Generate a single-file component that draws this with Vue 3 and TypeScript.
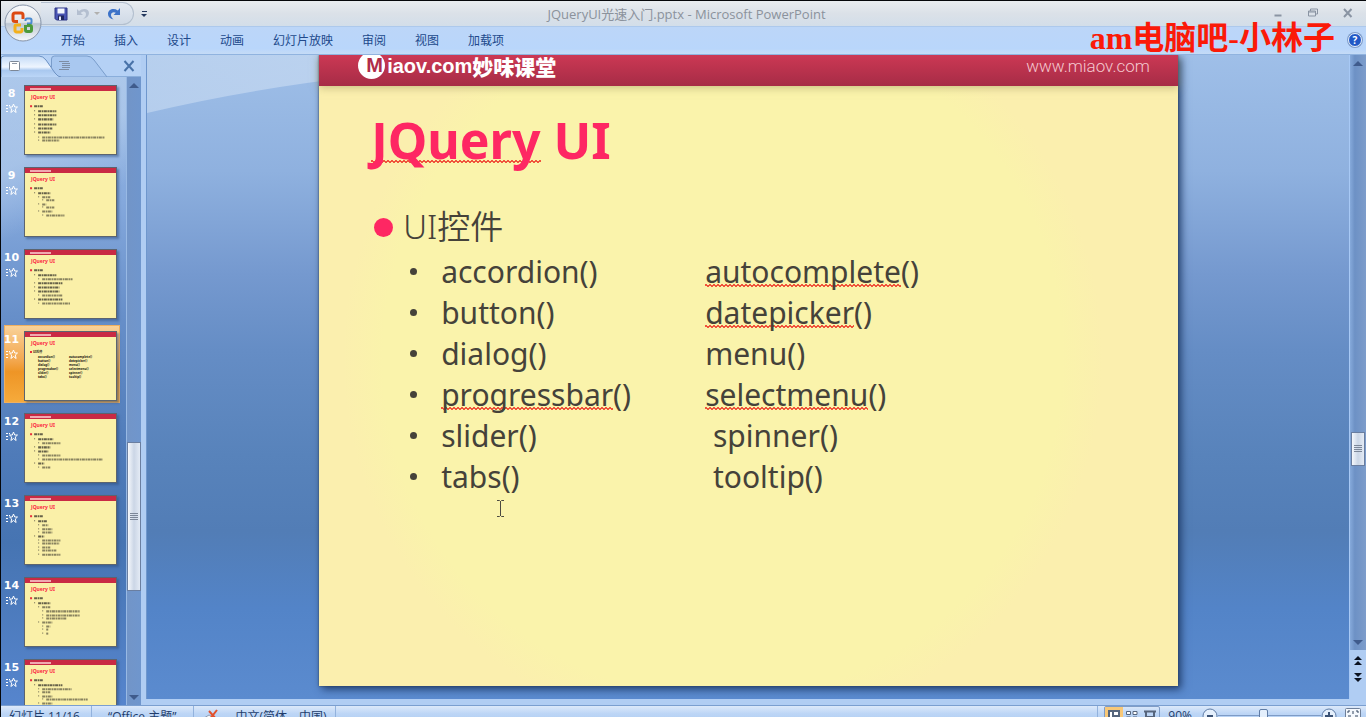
<script setup lang="ts">
import { ref } from 'vue'

interface Line {
  level: number
  width: number
  y: number
}
interface Thumb {
  no: number
  lines: Line[]
}
interface Cell {
  word: string
  pad?: string
  wavy?: boolean
}

const menus: string[] = ['开始', '插入', '设计', '动画', '幻灯片放映', '审阅', '视图', '加载项']

const l = (level: number, width: number, y: number): Line => ({ level, width, y })

const thumbs: Thumb[] = [
  { no: 8, lines: [l(0, 9, 19), l(1, 18, 24), l(1, 18, 28), l(1, 15, 32), l(1, 18, 37), l(1, 14, 41), l(1, 12, 45), l(2, 62, 50), l(2, 17, 53)] },
  { no: 9, lines: [l(0, 9, 19), l(1, 12, 24), l(2, 8, 28), l(3, 8, 31), l(2, 4, 35), l(3, 8, 38), l(2, 10, 42), l(3, 18, 46)] },
  { no: 10, lines: [l(0, 9, 19), l(1, 18, 24), l(2, 30, 28), l(1, 24, 32), l(1, 21, 36), l(1, 21, 40), l(2, 20, 44), l(1, 24, 48), l(2, 28, 52)] },
  { no: 11, lines: [] },
  { no: 12, lines: [l(0, 9, 19), l(1, 15, 24), l(2, 18, 28), l(1, 12, 32), l(1, 10, 36), l(2, 18, 40), l(2, 60, 44), l(1, 6, 48), l(2, 8, 52)] },
  { no: 13, lines: [l(0, 9, 19), l(1, 9, 24), l(2, 6, 28), l(2, 10, 32), l(2, 10, 35), l(1, 6, 39), l(2, 18, 43), l(2, 17, 46), l(2, 8, 50), l(2, 14, 53), l(2, 18, 57)] },
  { no: 14, lines: [l(0, 9, 19), l(1, 12, 24), l(2, 8, 28), l(3, 33, 32), l(3, 33, 36), l(3, 20, 39), l(2, 10, 43), l(3, 4, 47), l(3, 2, 50), l(3, 2, 54)] },
  { no: 15, lines: [l(0, 9, 19), l(1, 24, 24), l(2, 29, 28), l(2, 8, 31), l(2, 10, 35), l(3, 41, 38), l(2, 10, 42), l(3, 24, 45)] },
]
const current = ref<number>(11)
const zoom = ref<number>(44)

const rows: [Cell, Cell][] = [
  [{ word: 'accordion' }, { word: 'autocomplete', wavy: true }],
  [{ word: 'button' }, { word: 'datepicker', wavy: true }],
  [{ word: 'dialog' }, { word: 'menu' }],
  [{ word: 'progressbar', wavy: true }, { word: 'selectmenu', wavy: true }],
  [{ word: 'slider' }, { word: 'spinner', pad: '\u00a0' }],
  [{ word: 'tabs' }, { word: 'tooltip', pad: '\u00a0' }],
]
</script>

<template>
  <div class="screen">
    <div class="window">
      <header class="titlebar">
        <div class="qat">
          <button class="tool" aria-label="保存">
            <svg width="14" height="14" viewBox="0 0 14 14">
              <path d="M1 1h12v12H2.500L1 11.500z" fill="#4a55b4" stroke="#2c3484" />
              <path d="M3.500 1.500h7v5h-7z" fill="#f3f6fd" />
              <path d="M4 8.500h6V13H4z" fill="#20275f" />
              <path d="M5 9.500h2V13H5z" fill="#e6eaf6" />
            </svg>
          </button>
          <button class="tool" aria-label="撤消">
            <svg width="14" height="14" viewBox="0 0 14 14">
              <path d="M1 2v6h6L4.800 5.900C7 3.500 10 4 10 7c0 2-1 3.500-3 5 4-1 6-3.200 6-6C13 1.500 7 .5 3 4z" fill="#b4bfd0" />
            </svg>
          </button>
          <i class="caret pale"></i>
          <button class="tool" aria-label="恢复">
            <svg width="14" height="14" viewBox="0 0 14 14">
              <path d="M13 1v7H6.500L8.800 5.700C6.500 4.500 4 5.500 4 8c0 1.600 1 3 2.600 4.500C3 11.800 1 9.800 1 7c0-4.500 5.500-6.500 9.800-3.600z" fill="#3c72c8" />
            </svg>
          </button>
        </div>
        <button class="more" aria-label="自定义快速访问工具栏"><i class="bar"></i><i class="caret"></i></button>
        <h1 class="caption">JQueryUI光速入门.pptx - Microsoft PowerPoint</h1>
        <div class="winbtns">
          <button aria-label="最小化"><svg width="10" height="10" viewBox="0 0 10 10"><path d="M1.500 7.500h7" stroke="#8a94a3" stroke-width="2" /></svg></button>
          <button aria-label="还原"><svg width="10" height="10" viewBox="0 0 10 10"><path d="M2.500 3V1h7v5h-2M.5 3h7v5h-7zM.5 4h7" fill="none" stroke="#8a94a3" /></svg></button>
          <button aria-label="关闭"><svg width="10" height="10" viewBox="0 0 10 10"><path d="M1 1l7.500 8M8.500 1L1 9" stroke="#8a94a3" stroke-width="2" /></svg></button>
        </div>
      </header>

      <nav class="ribbon">
        <button v-for="m in menus" :key="m">{{ m }}</button>
        <button class="help" aria-label="帮助">?</button>
      </nav>
      <button class="orb" aria-label="Office 按钮">
        <svg width="38" height="38" viewBox="0 0 38 38">
          <defs>
            <linearGradient id="orb" x1="0" y1="0" x2="0" y2="1">
              <stop offset="0" stop-color="#fbfcfd" />
              <stop offset=".48" stop-color="#dfe4ea" />
              <stop offset=".52" stop-color="#bcc6d2" />
              <stop offset="1" stop-color="#f6f9fc" />
            </linearGradient>
          </defs>
          <circle cx="19" cy="19" r="18" fill="url(#orb)" stroke="#8593a8" />
          <g fill="none">
            <path d="M14 17.500h-3a2 2 0 0 1-2-2V11a2 2 0 0 1 2-2h6a2 2 0 0 1 2 2v4" stroke="#dc4a12" stroke-width="3" />
            <path d="M21.500 17v-1a1.500 1.500 0 0 1 1.500-1.500h3a1.500 1.500 0 0 1 1.500 1.500v2a1.500 1.500 0 0 1-1.500 1.500h-3" stroke="#4a8ad0" stroke-width="2" />
            <path d="M18 24v2.500a1.500 1.500 0 0 1-1.500 1.500h-4a1.500 1.500 0 0 1-1.500-1.500v-4a1.500 1.500 0 0 1 1.500-1.500H17" stroke="#f3b01c" stroke-width="3" />
            <path d="M21.500 21v5a1.500 1.500 0 0 0 1.500 1.500h3a1.500 1.500 0 0 0 1.500-1.500v-3a1.500 1.500 0 0 0-1.500-1.500h-3" stroke="#4b9a3c" stroke-width="3" />
          </g>
        </svg>
      </button>
      <p class="mark">am电脑吧-小林子</p>

      <main class="work">
        <aside class="panel">
          <div class="tabs">
            <svg class="tabshape" width="106" height="22" viewBox="0 0 106 22">
              <defs>
                <linearGradient id="tab" x1="0" y1="0" x2="0" y2="1">
                  <stop offset="0" stop-color="#c4dbf7" />
                  <stop offset=".5" stop-color="#eef5fe" />
                  <stop offset=".65" stop-color="#a9c8ef" />
                  <stop offset="1" stop-color="#bed8f8" />
                </linearGradient>
              </defs>
              <path d="M50.500 20V4q0-3 3-3H86q4 0 7 4l13 17H56z" fill="#a9c8f0" stroke="#7a9dcb" />
              <path d="M0 23V4q0-3 3-3h35q4 0 7 4l9 13q3 4 6 4" fill="url(#tab)" stroke="#6d92c4" />
              <rect x="8.500" y="6.500" width="10" height="9" rx="1" fill="#fff" stroke="#7c8796" />
              <path d="M11 8.500h5" stroke="#8e98a6" />
              <path d="M58 6.500h10M61 8.500h8M61 10.500h8M61 12.500h8M58 14.500h10" stroke="#7d8ea6" />
            </svg>
            <button class="shut" aria-label="关闭窗格">
              <svg width="12" height="12" viewBox="0 0 12 12"><path d="M1.500 1l9 10M10.500 1l-9 10" stroke="#4872a8" stroke-width="2" /></svg>
            </button>
          </div>
          <div class="listwrap">
            <ol class="list">
              <li v-for="t in thumbs" :key="t.no" :class="{ on: t.no === current }">
                <div class="side">
                  <b>{{ t.no }}</b>
                  <svg width="12" height="11" viewBox="0 0 12 11">
                    <path d="M7.500 1l1.200 3H11.500L9.300 6l.8 3.500-2.600-2-2.600 2L5.700 6 3.500 4h2.800z" fill="none" stroke="#fff" />
                    <path d="M0 2.500h4M0 5.500h3M0 8.500h3" stroke="#fff" stroke-dasharray="2 1" />
                  </svg>
                </div>
                <div class="mini">
                  <div class="minihead"></div>
                  <strong>JQuery UI</strong>
                  <div v-if="t.no === 11" class="minitext">
                    <p class="lead">UI控件</p>
                    <p v-for="r in rows" :key="r[0].word"><span>{{ r[0].word }}()</span><span>{{ r[1].word }}()</span></p>
                  </div>
                  <svg v-else class="lines" viewBox="0 0 90 68">
                    <template v-for="(n, i) in t.lines" :key="i">
                      <rect :x="5 + n.level * 4" :y="n.y" :width="n.level ? 1 : 2" :height="n.level ? 1 : 2" :fill="n.level ? '#6b6650' : '#e8303c'" />
                      <path :d="`M${9 + n.level * 4} ${n.y + 1}h${n.width}`" stroke="#4d4938" stroke-width="2" stroke-dasharray="3 .6 1.500 .5" :opacity="n.level > 1 ? 0.65 : 0.85" />
                    </template>
                  </svg>
                </div>
              </li>
            </ol>
            <div class="scroll">
              <i class="up"></i>
              <i class="gap"></i>
              <i class="grip"></i>
              <i class="gap low"></i>
              <i class="down"></i>
            </div>
          </div>
        </aside>

        <section class="canvas">
          <svg class="sheen" width="340" height="60" viewBox="0 0 340 60">
            <defs>
              <linearGradient id="sheen" x1="0" y1="0" x2="1" y2="0">
                <stop offset="0" stop-color="#bfd5f0" stop-opacity=".75" />
                <stop offset="1" stop-color="#c9dbf2" stop-opacity=".75" />
              </linearGradient>
            </defs>
            <path d="M0 0H340V10Q150 22 0 58z" fill="url(#sheen)" />
          </svg>
          <article class="slide">
            <div class="band">
              <div class="logo"><span class="disc">M</span><span class="latin">iaov.com</span><span class="han">妙味课堂</span></div>
              <span class="site">www.miaov.com</span>
            </div>
            <div class="body">
              <h2><span class="wavy">JQuery</span> UI</h2>
              <h3>UI控件</h3>
              <ul>
                <li v-for="r in rows" :key="r[0].word">
                  <span v-for="c in r" :key="c.word">{{ c.pad }}<span :class="{ wavy: c.wavy }">{{ c.word }}</span>()</span>
                </li>
              </ul>
            </div>
          </article>
          <svg class="ibeam" width="9" height="17" viewBox="0 0 9 17"><path d="M1 .5h2.500l1 1 1-1H8M4.500 1v15M1 16.500h2.500l1-1 1 1H8" fill="none" stroke="#4c4a40" /></svg>
        </section>

        <div class="vscroll">
          <div class="track">
            <i class="up"></i>
            <i class="gap"></i>
            <i class="grip"></i>
            <i class="gap low"></i>
            <i class="down"></i>
          </div>
          <button aria-label="上一张"><svg width="10" height="10" viewBox="0 0 10 10"><path d="M5 0l4 4H1zM5 5l4 4H1z" fill="#0b1220" /></svg></button>
          <button aria-label="下一张"><svg width="10" height="10" viewBox="0 0 10 10"><path d="M5 5L1 1h8zM5 10L1 6h8z" fill="#0b1220" /></svg></button>
        </div>
      </main>

      <footer class="status">
        <span class="cell first">幻灯片 11/16</span>
        <span class="cell theme">“Office 主题”</span>
        <span class="cell lang">
          <svg width="16" height="16" viewBox="0 0 16 16">
            <path d="M1 10l5-3 4 2v6H1z" fill="#eef3fa" stroke="#8c9bb3" />
            <path d="M6 3l8 9M14 2L6 12" stroke="#e2502c" stroke-width="2" />
          </svg>
          中文(简体，中国)
        </span>
        <div class="right">
          <div class="views">
            <button class="on" aria-label="普通视图"><svg width="12" height="11" viewBox="0 0 12 11"><path d="M1 1h10v9H1zM5 1v9M5 6h6" fill="#fff" stroke="#56657c" stroke-width="2" /></svg></button>
            <button aria-label="幻灯片浏览"><svg width="12" height="11" viewBox="0 0 12 11"><path d="M.5 1.500h4v3h-4zM7 1.500h4v3H7zM.5 7h4v3h-4zM7 7h4v3H7z" fill="#fff" stroke="#56657c" /></svg></button>
            <button aria-label="幻灯片放映"><svg width="12" height="11" viewBox="0 0 12 11"><path d="M0 1.500h12M2 2v5h8V2M6 7v4" fill="none" stroke="#56657c" stroke-width="2" /></svg></button>
          </div>
          <span class="pct">90%</span>
          <button class="round" aria-label="缩小"><svg width="16" height="16" viewBox="0 0 16 16"><circle cx="8" cy="8" r="7" fill="#e4effc" stroke="#5f7ca6" /><path d="M5 8h6" stroke="#3b5275" stroke-width="2" /></svg></button>
          <input v-model.number="zoom" type="range" min="0" max="100" aria-label="显示比例" />
          <button class="round" aria-label="放大"><svg width="16" height="16" viewBox="0 0 16 16"><circle cx="8" cy="8" r="7" fill="#e4effc" stroke="#5f7ca6" /><path d="M4 8h8M8 4v8" stroke="#3b5275" stroke-width="2" /></svg></button>
          <button class="fit" aria-label="适应窗口"><svg width="16" height="16" viewBox="0 0 16 16"><rect x=".5" y=".5" width="15" height="15" rx="1" fill="#f4f8fd" stroke="#6e7f99" /><path d="M3 5V3h2M13 5V3h-2M3 11v2h2M13 11v2h-2M8 3v3M8 10v3M3 8h3M10 8h3" fill="none" stroke="#33445f" /></svg></button>
        </div>
      </footer>
    </div>
  </div>
</template>

<style>
body {
  margin: 0;
  background: #000;
}
</style>

<style scoped>
* {
  box-sizing: border-box;
}
button {
  padding: 0;
  border: 0;
  background: none;
  font: inherit;
  color: inherit;
}
button svg {
  display: block;
}
.screen {
  height: 100vh;
  overflow: hidden;
  font: 12px "Open Sans", "Noto Sans CJK SC", sans-serif;
}
.window {
  position: relative;
  display: flex;
  flex-direction: column;
  height: calc(100vh + 8px);
  border: solid #05070a;
  border-width: 1px 0 0 1px;
}

/* title bar */
.titlebar {
  position: relative;
  flex: none;
  display: flex;
  align-items: center;
  height: 25px;
  background: linear-gradient(#e9edf0, #dbe1e8 50%, #d3dee9);
}
.qat {
  display: flex;
  align-items: center;
  gap: 6px;
  height: 23px;
  margin-left: 40px;
  padding: 0 12px 0 13px;
  border: 1px solid #b3bfce;
  border-left: 0;
  border-radius: 0 12px 12px 0;
  background: linear-gradient(#e4eaf1, #cfd9e6);
}
.tool + .tool {
  margin-left: 2px;
}
.caret {
  border: 3px solid transparent;
  border-top-color: #22365c;
  border-bottom: 0;
}
.caret.pale {
  margin-left: -2px;
  border-top-color: #b1b0ae;
}
.caret + .tool {
  margin-left: 1px;
}
.more {
  display: flex;
  flex-direction: column;
  align-items: center;
  gap: 2px;
  margin-left: 7px;
}
.more .bar {
  width: 5px;
  height: 1px;
  background: #22365c;
}
.caption {
  position: absolute;
  inset: 0;
  margin: 2px 0 0;
  font-size: 13px;
  line-height: 22px;
  font-weight: 400;
  text-align: center;
  color: #8b929c;
  pointer-events: none;
  padding-left: 6px;
}
.winbtns {
  display: flex;
  gap: 25px;
  margin-left: auto;
  padding: 0 13px 2px 0;
}

/* ribbon tabs */
.ribbon {
  flex: none;
  display: flex;
  align-items: center;
  gap: 29px;
  height: 29px;
  padding: 0 4px 2px 60px;
  background: linear-gradient(#bcd6f8, #b9d6fb 80%, #c5dbf6);
  border-top: 1px solid #adc9ec;
  border-bottom: 1px solid #90b3df;
  color: #21498b;
}
.help {
  width: 14px;
  height: 14px;
  margin-left: auto;
  border: 1px solid #e5f0fd;
  border-radius: 50%;
  background: #2158c6;
  box-shadow: 0 0 0 1px #7f9cc9;
  color: #fff;
  font-size: 10px;
  font-weight: 700;
  line-height: 12px;
}
.orb {
  position: absolute;
  left: 3px;
  top: 3px;
}
.mark {
  position: absolute;
  right: 31px;
  top: 14px;
  margin: 0;
  font: 700 32px/46px "Liberation Serif", "Noto Sans CJK SC", serif;
  color: #fb1a08;
}

/* work area */
.work {
  flex: 1;
  min-height: 0;
  display: flex;
  background: #b0cdf3;
}
.panel {
  flex: none;
  display: flex;
  flex-direction: column;
  width: 140px;
}
.tabs {
  flex: none;
  display: flex;
  justify-content: space-between;
  height: 22px;
  background: #b5d1f5;
  border-bottom: 1px solid #8aaedb;
}
.shut {
  padding: 0 6px;
}
.listwrap {
  flex: 1;
  min-height: 0;
  display: flex;
  background:
    linear-gradient(155deg, #c2d7f080 85px, #c2d7f000 150px),
    linear-gradient(#96b8e5, #84a8dc 20%, #678fc9 38%, #4f7bb9 60%, #4674b2 74%, #5685cd);
}
.list {
  flex: 1;
  margin: 0;
  padding: 2px 0 0 3px;
  list-style: none;
  overflow: hidden;
}
.list li {
  display: flex;
  width: 116px;
  height: 78px;
  margin-bottom: 4px;
  padding-top: 6px;
}
.list li.on {
  background: linear-gradient(#f9d39b, #f3a850 45%, #ee9526 60%, #f6ab3c);
  box-shadow: inset 0 0 0 1px #f0b060;
}
.side {
  flex: none;
  display: flex;
  flex-direction: column;
  align-items: center;
  width: 20px;
  padding-right: 5px;
  color: #fff;
}
.side b {
  font: 700 11px/18px "DejaVu Sans", sans-serif;
}
.mini {
  position: relative;
  width: 93px;
  height: 70px;
  border: 1px solid #fff6d0;
  outline: 1px solid #5b6470;
  outline-offset: -1px;
  background: #faf0a8;
  box-shadow: 2px 2px 2px #2b4d7d80;
  overflow: hidden;
}
.minihead {
  height: 5px;
  background: linear-gradient(90deg, transparent 5px, #f0a9b0 5px, #f0a9b0 26px, transparent 26px) 0 2px / 100% 2px no-repeat, #c92a44;
}
.mini strong {
  display: block;
  padding-left: 6px;
  font: 700 5px/13px "Noto Sans", sans-serif;
  color: #fa2543;
}
.lines {
  position: absolute;
  inset: 0;
}
.minitext {
  padding-left: 13px;
  font: 700 3px/4px "Noto Sans", "Noto Sans CJK SC", sans-serif;
  color: #16150f;
}
.minitext p {
  display: grid;
  grid-template-columns: 31px auto;
  margin: 0;
}
.minitext .lead {
  grid-template-columns: 3px auto;
  margin: 0 0 1px -8px;
}
.minitext .lead::before {
  content: "";
  width: 2px;
  height: 2px;
  margin-top: 1px;
  background: #e8303c;
}
.scroll {
  flex: none;
  display: flex;
  flex-direction: column;
  align-items: center;
  width: 15px;
  padding: 6px 0 5px;
  border-left: 1px solid #98b9e4;
  background: linear-gradient(90deg, #7295c8, #6f96cd);
}
.up,
.down {
  flex: none;
  border: 5px solid transparent;
}
.up {
  border-top: 0;
  border-bottom-color: #3f5b8c;
}
.down {
  border-bottom: 0;
  border-top-color: #3f5b8c;
}
.gap {
  flex: 352;
}
.scroll .low {
  flex: 104;
}
.grip {
  flex: none;
  width: 14px;
  height: 149px;
  border: 1px solid #6a7ea0;
  background:
    repeating-linear-gradient(#7c8798 0 1px, transparent 1px 2px) center / 8px 7px no-repeat,
    linear-gradient(90deg, #f5f8fc, #cbd6e6 50%, #e4ebf5);
}

/* slide canvas */
.canvas {
  position: relative;
  flex: 1;
  display: flex;
  justify-content: center;
  margin: 0 0 6px 5px;
  padding-left: 1px;
  border-left: 1px solid #6f97cd;
  background: linear-gradient(#9fbfe8, #8fb1df 18%, #7599cf 34%, #658dc5 46%, #5883bb 62%, #527db6 74%, #5384c8 86%, #5b8bcf);
  overflow: hidden;
}
.sheen {
  position: absolute;
  left: 0;
  top: 0;
}
.slide {
  position: relative;
  width: 71.500%;
  margin-bottom: 13px;
  display: flex;
  flex-direction: column;
  background: radial-gradient(circle at 47% 48%, #faf3ab 0 340px, #fbefae 380px);
  box-shadow: 3px 3px 8px #203c6a, 0 0 2px #3c4a52;
}
.band {
  flex: none;
  display: flex;
  align-items: flex-start;
  justify-content: space-between;
  height: 31px;
  padding: 0 28px 0 39px;
  background: linear-gradient(#cc3854, #a62c46);
  box-shadow: 0 2px 8px #a59b6490;
}
.logo {
  display: flex;
  align-items: center;
  height: 22px;
  color: #fff;
  font-weight: 700;
}
.disc {
  width: 27px;
  height: 27px;
  margin: 0 2px 2px 0;
  padding-left: 8px;
  border-radius: 50%;
  background: #fff;
  color: #b02c48;
  font: 700 20px/27px "Liberation Sans", sans-serif;
}
.latin {
  font: 700 20px/22px "Liberation Sans", sans-serif;
}
.han {
  font: 900 21px/22px "Noto Sans CJK SC", sans-serif;
}
.site {
  font: 300 17px/22px Roboto, sans-serif;
  color: #f4c8cf;
}
.body {
  padding: 24px 52px;
  color: #45423a;
  font-family: "Noto Sans", "Noto Sans CJK SC", sans-serif;
}
h2 {
  margin: 0;
  font-size: 50px;
  line-height: 60px;
  font-weight: 700;
  color: #fe2763;
}
h3 {
  display: flex;
  align-items: center;
  gap: 10px;
  margin: 33px 0 0;
  padding-left: 3px;
  font-size: 33px;
  line-height: 48px;
  font-weight: 350;
}
h3::before {
  content: "";
  width: 19px;
  height: 19px;
  border-radius: 50%;
  background: #fe2763;
}
ul {
  margin: 0;
  padding: 0 0 0 70px;
  list-style: none;
}
ul li {
  position: relative;
  display: grid;
  grid-template-columns: 264px auto;
  font-size: 30px;
  line-height: 41px;
}
ul li::before {
  content: "";
  position: absolute;
  left: -31px;
  top: 17px;
  width: 7px;
  height: 7px;
  border-radius: 50%;
  background: #45423a;
}
.wavy {
  background:
    linear-gradient(45deg, transparent 42%, #f0543c 42% 60%, transparent 60%) left 0 bottom 5px / 4px 3px repeat-x,
    linear-gradient(135deg, transparent 42%, #f0543c 42% 60%, transparent 60%) left 2px bottom 5px / 4px 3px repeat-x;
}
h2 .wavy {
  background-position: left 0 bottom 11px, left 2px bottom 11px;
}
.ibeam {
  position: absolute;
  left: 349px;
  top: 445px;
}

/* right scroll bar */
.vscroll {
  flex: none;
  display: flex;
  flex-direction: column;
  align-items: center;
  gap: 6px;
  width: 17px;
  margin-bottom: 6px;
  padding-bottom: 17px;
  border-left: 1px solid #a8c9f5;
}
.track {
  flex: 1;
  display: flex;
  flex-direction: column;
  align-items: center;
  align-self: stretch;
  padding: 6px 0 5px;
  background: linear-gradient(90deg, #86aadb, #6d91c5 30%, #7d9dcb);
}
.track .gap {
  flex: 365;
}
.track .low {
  flex: 174;
}
.track .grip {
  height: 34px;
}

/* status bar */
.status {
  flex: none;
  display: flex;
  align-items: center;
  height: 20px;
  background: linear-gradient(#dce9fa, #bdd6f6 40%, #a9c8ef);
  border-top: 1px solid #7b9fd0;
  color: #223d6b;
  font-size: 12px;
}
.cell {
  display: flex;
  align-items: center;
  gap: 16px;
  height: 100%;
  border-right: 1px solid #92b2dd;
}
.first {
  padding: 0 11px 0 8px;
}
.theme {
  padding: 0 17px 0 16px;
}
.lang {
  padding: 0 9px;
}
.right {
  display: flex;
  align-items: center;
  margin-left: auto;
  height: 100%;
  padding: 0 5px 0 6px;
  border-left: 1px solid #92b2dd;
}
.views {
  display: flex;
  border: 1px solid #7f9cc6;
  border-radius: 2px;
}
.views button {
  display: grid;
  place-items: center;
  width: 18px;
  height: 18px;
}
.views .on {
  background: #f8c878;
}
.pct {
  margin: 0 10px 0 8px;
}
input[type="range"] {
  appearance: none;
  width: 103px;
  height: 16px;
  margin: 0;
  background: linear-gradient(#7d9bc6, #7d9bc6) center / 100% 1px no-repeat;
}
input[type="range"]::-webkit-slider-thumb {
  appearance: none;
  width: 9px;
  height: 14px;
  border: 1px solid #5f7ca6;
  border-radius: 2px;
  background: #e4effc;
}
.fit {
  margin-left: 8px;
}
</style>
